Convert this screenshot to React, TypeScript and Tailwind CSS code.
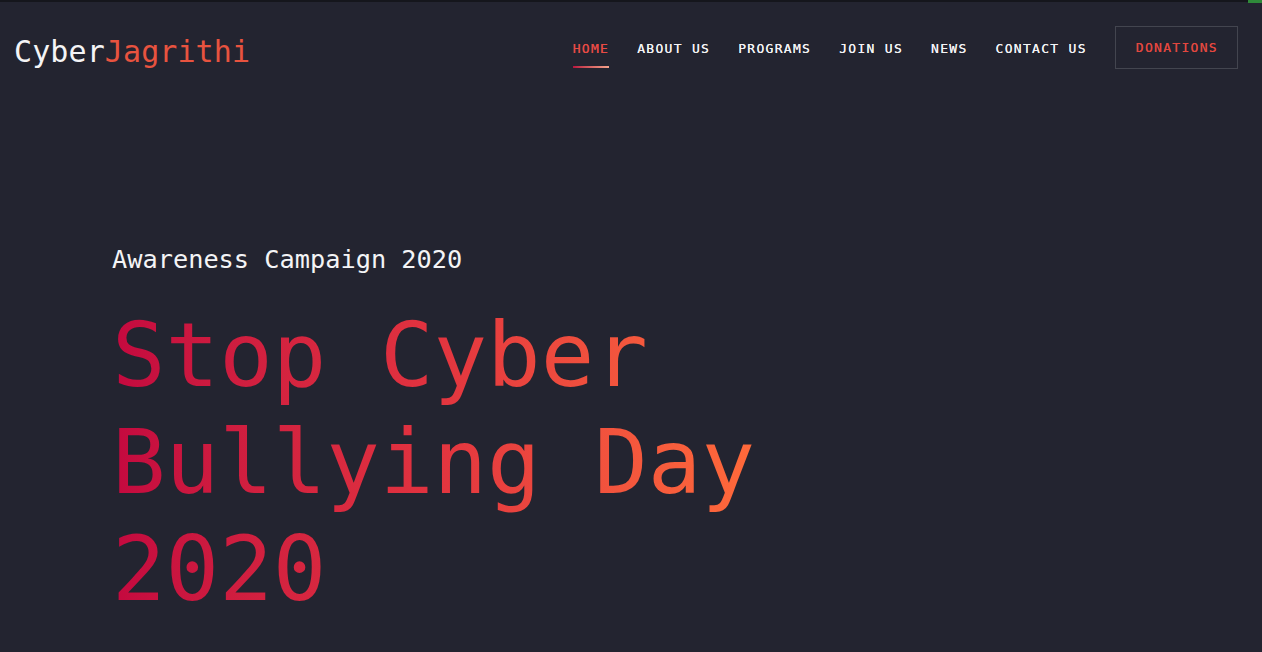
import React from "react";

const links = ["HOME", "ABOUT US", "PROGRAMS", "JOIN US", "NEWS", "CONTACT US"];

export default function App() {
  return (
    <div
      className="relative min-h-screen w-full overflow-hidden bg-[#232430] text-white"
      style={{ fontFamily: '"DejaVu Sans Mono", "Liberation Mono", monospace' }}
    >
      <div className="h-[2px] w-full bg-[#15161c]" />
      <div className="absolute right-0 top-0 h-[3px] w-[14px] bg-[#2f8a3a]" />
      <header className="flex items-start justify-between pl-[14px] pr-[24px] pt-[24px]">
        <div className="mt-[8px] text-[30px] leading-[36px] tracking-[0.1px]">
          <span className="text-[#f4f4f6]">Cyber</span>
          <span className="text-[#e8533f]">Jagrithi</span>
        </div>
        <nav className="flex items-start gap-[28px]">
          {links.map((l, i) => (
            <div key={l} className="mt-[15px] flex flex-col">
              <span
                className={
                  "text-[13px] leading-[16px] tracking-[1.3px] [text-shadow:0_0_0.4px_currentColor] " +
                  (i === 0 ? "text-[#e84a45]" : "text-[#f3f3f5]")
                }
              >
                {l}
              </span>
              {i === 0 ? (
                <span className="mt-[9px] h-[2px] w-[36px] bg-linear-to-r from-[#b8103f] to-[#f4a28c]" />
              ) : null}
            </div>
          ))}
          <div className="flex h-[43px] items-center border border-[#43454f] pl-[20px] pr-[19px] pt-[1px] text-[13px] leading-[16px] tracking-[1.3px] text-[#e2473f] [text-shadow:0_0_0.4px_currentColor]">
            DONATIONS
          </div>
        </nav>
      </header>
      <main className="pl-[112px] pt-[175px]">
        <p className="text-[25.3px] leading-[30px] text-[#f4f4f6]">Awareness Campaign 2020</p>
        <h1 className="mt-[27px] inline-block bg-linear-to-r from-[#c4083f] via-[#e2333f] to-[#ff6a3a] bg-clip-text text-[89px] font-normal leading-[107px] text-transparent">
          Stop Cyber
          <br />
          Bullying Day
          <br />
          2020
        </h1>
      </main>
    </div>
  );
}
